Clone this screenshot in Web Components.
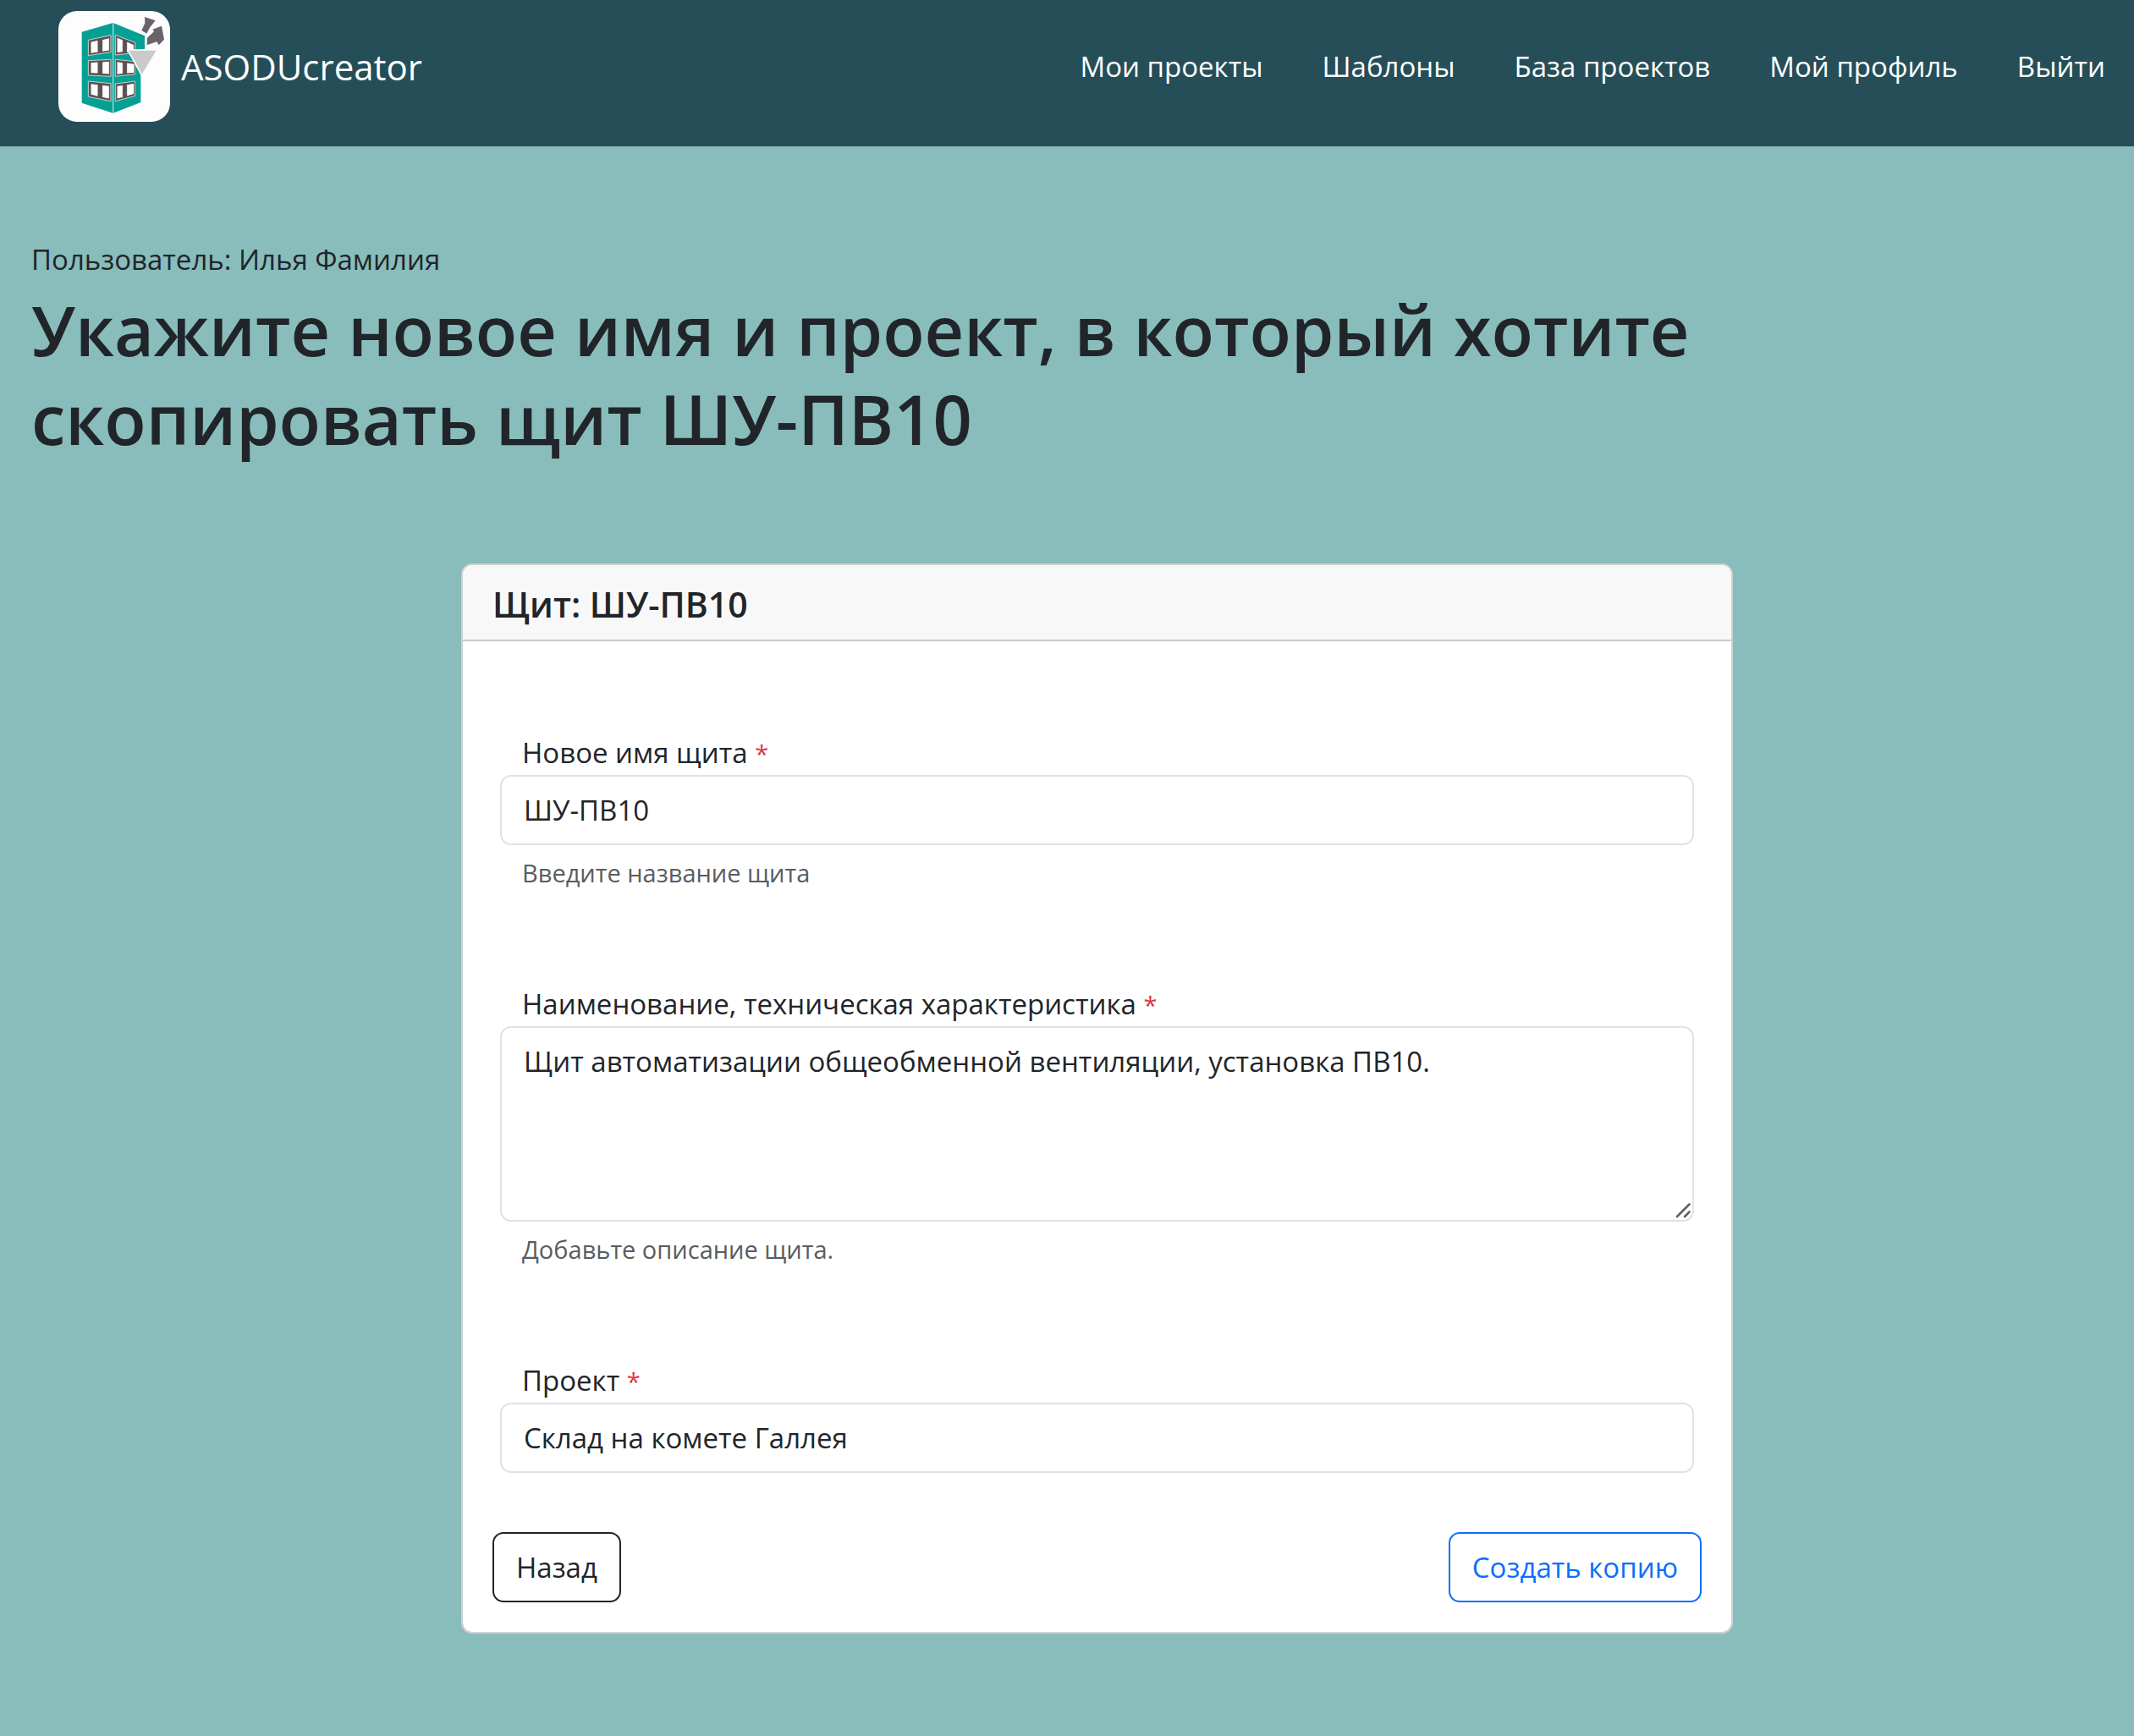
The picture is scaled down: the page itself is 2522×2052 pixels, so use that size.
<!DOCTYPE html>
<html lang="ru">
<head>
<meta charset="utf-8">
<meta name="viewport" content="width=device-width, initial-scale=1">
<title>ASODUcreator</title>
<style>
  html { background: #88bdbc; }
  body {
    margin: 0;
    min-height: 100vh;
    background: #88bdbc;
    color: #212529;
    font-family: "Open Sans", "Noto Sans", sans-serif;
    font-size: 33px;
    line-height: 53px;
  }
</style>
</head>
<body>
<app-navbar>
  <nav-link href="#projects">Мои проекты</nav-link>
  <nav-link href="#templates">Шаблоны</nav-link>
  <nav-link href="#base">База проектов</nav-link>
  <nav-link href="#profile">Мой профиль</nav-link>
  <nav-link href="#logout">Выйти</nav-link>
</app-navbar>
<copy-page>
  <span slot="user">Пользователь: Илья Фамилия</span>
  <span slot="title">Укажите новое имя и проект, в который хотите скопировать щит ШУ-ПВ10</span>
  <form-card>
    <span slot="title">Щит: ШУ-ПВ10</span>
    <form-field kind="text" label="Новое имя щита" value="ШУ-ПВ10" help="Введите название щита"></form-field>
    <form-field kind="area" label="Наименование, техническая характеристика" value="Щит автоматизации общеобменной вентиляции, установка ПВ10." help="Добавьте описание щита."></form-field>
    <form-field kind="select" label="Проект" value="Склад на комете Галлея"></form-field>
    <action-button slot="actions" tone="dark">Назад</action-button>
    <action-button slot="actions" tone="primary">Создать копию</action-button>
  </form-card>
</copy-page>

<script>
class BaseElement extends HTMLElement {
  constructor() {
    super();
    this.attachShadow({ mode: 'open' }).innerHTML =
      '<style>*{box-sizing:border-box}</style>' + this.template();
  }
}

customElements.define('brand-logo', class extends BaseElement {
  template() {
    return `
    <style>
      :host { display: block; width: 132px; height: 131px; flex: none; }
      svg { display: block; width: 100%; height: 100%; }
    </style>
    <svg viewBox="27 24 396 393" aria-hidden="true">
      <rect x="27" y="24" width="396" height="393" rx="66" fill="#fdfdfd"/>
      <path d="M110 98 221 66 333 112V159H319V348L221 386 110 350Z" fill="#04a094"/>
      <path d="M221 66V386" stroke="#b5d8d2" stroke-width="4"/>
      <g fill="#5c5152" stroke="#c5d5d0" stroke-width="3">
        <path d="M133 127 213 110V170L133 182ZM133 200 213 196V256L133 252ZM133 273 213 281V344L133 328Z"/>
        <path d="M229 109 299 136V173L229 180ZM229 196 299 203V248L229 256ZM229 282 299 273V325L229 344Z"/>
      </g>
      <g fill="#fff" stroke="#5c5152" stroke-width="3">
        <path d="M141 133 168 127V171L141 175ZM182 125 208 119V165L182 169Z"/>
        <path d="M141 206 168 204V246L141 245ZM182 204 208 202V249L182 247Z"/>
        <path d="M141 281 168 284V328L141 321ZM182 286 208 289V336L182 331Z"/>
        <path d="M234 117 256 126V170L234 173ZM269 132 295 143V173L269 172Z"/>
        <path d="M234 203 256 206V247L234 250ZM269 207 297 211V244L269 246Z"/>
        <path d="M234 289 256 286V331L234 336ZM269 284 296 280V319L269 327Z"/>
      </g>
      <path d="M273 162H378L323 253Z" fill="#c9cac9" stroke="#fdfdfd" stroke-width="5"/>
      <path d="M333 45 371 58 351 83 340 104 322 93 334 67Z" fill="#69636a"/>
      <path d="M361 89 393 77 402 125 383 145 376 133 341 145 342 119 366 97Z" fill="#69636a"/>
    </svg>`;
  }
});

customElements.define('app-navbar', class extends BaseElement {
  template() {
    return `
    <style>
      :host { display: block; background: #254e58; color: #fff; }
      header { display: flex; align-items: center; justify-content: space-between; padding: 13px 34px 29px 69px; }
      .brand { display: flex; align-items: center; gap: 13px; color: inherit; text-decoration: none; font-size: 42px; line-height: 66px; }
      nav { display: flex; align-items: center; gap: 70px; }
    </style>
    <header>
      <a class="brand" href="#home"><brand-logo></brand-logo><span>ASODUcreator</span></a>
      <nav><slot></slot></nav>
    </header>`;
  }
});

customElements.define('nav-link', class extends BaseElement {
  template() {
    return `
    <style>
      :host { display: block; }
      a { color: #fff; text-decoration: none; white-space: nowrap; }
    </style>
    <a><slot></slot></a>`;
  }
  connectedCallback() {
    this.shadowRoot.querySelector('a').href = this.getAttribute('href');
  }
});

customElements.define('copy-page', class extends BaseElement {
  template() {
    return `
    <style>
      :host { display: block; }
      main { padding: 107px 37px; }
      p { margin: 0 0 4px; }
      h1 { margin: 0 0 119px; font-size: 81px; line-height: 105px; font-weight: 600; }
      .row { display: grid; grid-template-columns: 508fr 1503fr 437fr; }
      .row > div { grid-column: 2; min-width: 0; }
    </style>
    <main>
      <p><slot name="user"></slot></p>
      <h1><slot name="title"></slot></h1>
      <div class="row"><div><slot></slot></div></div>
    </main>`;
  }
});

customElements.define('form-card', class extends BaseElement {
  template() {
    return `
    <style>
      :host { display: block; }
      section { background: #fff; background-clip: padding-box; border: 2px solid #cfd0d1; border-radius: 13px; overflow: hidden; }
      h5 { margin: 0; padding: 20px 35px 15px; background: #f8f8f8; border-bottom: 2px solid #c9cacb; font-size: 41px; line-height: 53px; font-weight: 600; }
      form { padding: 106px 35px 35px; }
      .fields { display: flex; flex-direction: column; gap: 106px; padding: 0 9px; }
      .actions { display: flex; justify-content: space-between; margin-top: 70px; }
    </style>
    <section>
      <h5><slot name="title"></slot></h5>
      <form>
        <div class="fields"><slot></slot></div>
        <div class="actions"><slot name="actions"></slot></div>
      </form>
    </section>`;
  }
});

customElements.define('form-field', class extends BaseElement {
  template() {
    return `
    <style>
      :host { display: block; }
      label { display: block; padding-left: 26px; line-height: 52px; }
      .star { color: #dc3545; font-size: 29px; line-height: 1; }
      .holder { position: relative; }
      .control {
        display: block; width: 100%; height: 83px; margin: 0; padding: 13px 26px;
        border: 2px solid #dee2e6; border-radius: 13px; background: #fff;
        color: inherit; font: inherit; line-height: 53px; outline: none; appearance: none;
      }
      textarea.control { height: 231px; resize: vertical; }
      textarea::-webkit-resizer { background: transparent; }
      .grip { position: absolute; right: 2px; bottom: 2px; width: 24px; height: 24px; pointer-events: none; }
      small { display: block; margin-top: 9px; padding-left: 26px; font-size: 29px; line-height: 47px; color: #595c5f; }
    </style>
    <label for="control"><span class="text"></span> <span class="star">*</span></label>
    <div class="holder"></div>`;
  }
  connectedCallback() {
    const root = this.shadowRoot;
    const kind = this.getAttribute('kind');
    const value = this.getAttribute('value');
    root.querySelector('.text').textContent = this.getAttribute('label');
    const control = document.createElement(
      kind === 'area' ? 'textarea' : kind === 'select' ? 'select' : 'input');
    if (kind === 'select') control.add(new Option(value, value));
    control.value = value;
    control.id = 'control';
    control.className = 'control';
    control.required = true;
    control.spellcheck = false;
    const holder = root.querySelector('.holder');
    holder.replaceChildren(control);
    if (kind === 'area') {
      holder.insertAdjacentHTML('beforeend',
        '<svg class="grip" viewBox="0 0 24 24" aria-hidden="true"><path d="M6 20 20.5 5.5M15 20 20.5 14.5" stroke="#5f6062" stroke-width="2.6" stroke-linecap="round"/></svg>');
    }
    const help = this.getAttribute('help');
    if (help) {
      const small = document.createElement('small');
      small.textContent = help;
      holder.after(small);
    }
  }
});

customElements.define('action-button', class extends BaseElement {
  template() {
    return `
    <style>
      :host { display: block; --tone: #212529; }
      :host([tone="primary"]) { --tone: #0d6efd; }
      button {
        display: block; margin: 0; padding: 13px 26px; height: 83px;
        border: 2px solid var(--tone); border-radius: 13px; background: transparent;
        color: var(--tone); font: inherit; cursor: pointer;
      }
    </style>
    <button type="button"><slot></slot></button>`;
  }
});
</script>
</body>
</html>
